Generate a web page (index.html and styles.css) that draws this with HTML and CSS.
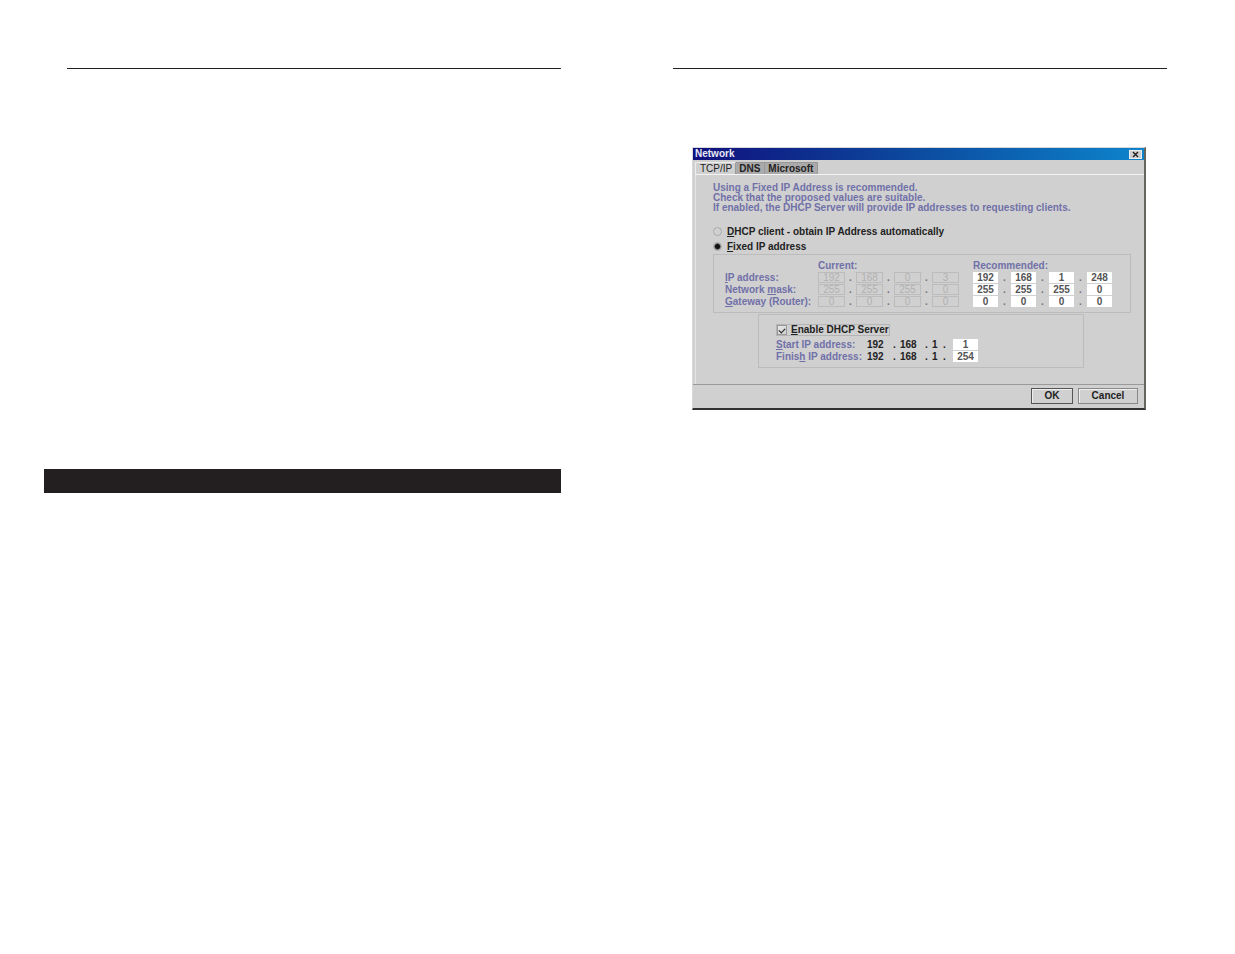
FILE: index.html
```html
<!DOCTYPE html>
<html lang="en">
<head>
	<meta charset="utf-8">
	<title>Network</title>
	<link rel="stylesheet" href="styles.css">
</head>
<body>
<div class="spread">
	<section class="page">
		<hr class="rule">
		<div class="band"></div>
	</section>
	<section class="page">
		<hr class="rule">
		<form class="dialog">
			<div class="titlebar">
				<span>Network</span>
				<button type="button" class="close" aria-label="Close">
					<svg width="7" height="7" viewBox="0 0 7 7"><path d="M1 1L6 6M6 1L1 6" stroke="#222" stroke-width="1.4"/></svg>
				</button>
			</div>
			<div class="tabs">
				<button type="button" class="tab active">TCP/IP</button>
				<button type="button" class="tab">DNS</button>
				<button type="button" class="tab">Microsoft</button>
			</div>
			<div class="panel">
				<p class="intro">Using a Fixed IP Address is recommended.<br>
				Check that the proposed values are suitable.<br>
				If enabled, the DHCP Server will provide IP addresses to requesting clients.</p>

				<label class="choice"><input type="radio" name="mode"><span><u>D</u>HCP client - obtain IP Address automatically</span></label>
				<label class="choice"><input type="radio" name="mode" checked><span><u>F</u>ixed IP address</span></label>

				<div class="group addresses">
					<span></span><span>Current:</span><span>Recommended:</span>

					<label for="ip"><u>I</u>P address:</label>
					<div class="octets current">
						<input value="192" aria-label="Current IP 1" disabled><i>.</i><input value="168" aria-label="Current IP 2" disabled><i>.</i><input value="0" aria-label="Current IP 3" disabled><i>.</i><input value="3" aria-label="Current IP 4" disabled>
					</div>
					<div class="octets">
						<input id="ip" value="192"><i>.</i><input value="168" aria-label="IP 2"><i>.</i><input value="1" aria-label="IP 3"><i>.</i><input value="248" aria-label="IP 4">
					</div>

					<label for="mask">Network <u>m</u>ask:</label>
					<div class="octets current">
						<input value="255" aria-label="Current mask 1" disabled><i>.</i><input value="255" aria-label="Current mask 2" disabled><i>.</i><input value="255" aria-label="Current mask 3" disabled><i>.</i><input value="0" aria-label="Current mask 4" disabled>
					</div>
					<div class="octets">
						<input id="mask" value="255"><i>.</i><input value="255" aria-label="Mask 2"><i>.</i><input value="255" aria-label="Mask 3"><i>.</i><input value="0" aria-label="Mask 4">
					</div>

					<label for="gateway"><u>G</u>ateway (Router):</label>
					<div class="octets current">
						<input value="0" aria-label="Current gateway 1" disabled><i>.</i><input value="0" aria-label="Current gateway 2" disabled><i>.</i><input value="0" aria-label="Current gateway 3" disabled><i>.</i><input value="0" aria-label="Current gateway 4" disabled>
					</div>
					<div class="octets">
						<input id="gateway" value="0"><i>.</i><input value="0" aria-label="Gateway 2"><i>.</i><input value="0" aria-label="Gateway 3"><i>.</i><input value="0" aria-label="Gateway 4">
					</div>
				</div>

				<div class="group dhcp">
					<label class="enable"><input type="checkbox" checked><span><u>E</u>nable DHCP Server</span></label>
					<div class="range">
						<label for="start"><u>S</u>tart IP address:</label>
						<b>192</b><b>.</b><b>168</b><b>.</b><b>1</b><b>.</b>
						<input id="start" value="1">
					</div>
					<div class="range">
						<label for="finish">Finis<u>h</u> IP address:</label>
						<b>192</b><b>.</b><b>168</b><b>.</b><b>1</b><b>.</b>
						<input id="finish" value="254">
					</div>
				</div>
			</div>
			<div class="buttons">
				<button type="button" class="ok">OK</button>
				<button type="button" class="cancel">Cancel</button>
			</div>
		</form>
	</section>
</div>
</body>
</html>
```
FILE: styles.css
```css
*{margin: 0;padding: 0;box-sizing: border-box;}
body{background: #fff;}
.spread{
	display: grid;
	grid-template-columns: 1fr 1fr;
	gap: 112px;
	padding: 68px 68px 68px 67px;
}
.rule{border: 0; height: 1px; background: #231f20;}
.band{height: 24px; margin: 400px 0 0 -23px; background: #231f20;}

.dialog{
	margin: 78px 21px 0 19px;
	background: #d0d0d0;
	border: 1px solid #d8d8d8;
	border-right: 2px solid #66665f;
	border-bottom: 2px solid #333;
	font: bold 10px/12px "Liberation Sans", Arial, sans-serif;
	color: #222;
}
.dialog input, .dialog button{font: inherit; color: inherit;}
.dialog u{text-underline-offset: 1px;}

.titlebar{
	display: flex;
	align-items: center;
	justify-content: space-between;
	height: 12px;
	padding: 0 2px;
	background: linear-gradient(to right, #10107c, #0c4ba0 50%, #0d84cc);
	color: #e8e8f4;
}
.close{
	display: flex;
	align-items: center;
	justify-content: center;
	width: 13px;
	height: 9px;
	border: 1px solid #eee;
	background: #d0d0d0;
}

.tabs{display: flex; padding: 2px 2px 0;}
.dialog .tab{
	height: 12px;
	padding: 0 4px 0 3px;
	border: 1px solid #999;
	border-width: 1px 1px 0 0;
	background: #aaa;
	line-height: 11px;
}
.dialog .tab.active{
	padding: 0 3px 0 4px;
	border-color: #eee #999 #eee #eee;
	border-left-width: 1px;
	background: #d0d0d0;
	font-weight: normal;
}

.panel{
	margin-left: 2px;
	padding: 8px 13px 16px 17px;
	border-top: 1px solid #f4f4f4;
	border-left: 1px solid #e4e4e4;
}
.intro{line-height: 10px; color: #7070a8; margin-bottom: 11px;}
.choice{display: flex; align-items: center; gap: 5px; height: 15px;}
.choice input{
	appearance: none;
	width: 9px;
	height: 9px;
	border: 1px solid #aaa;
	border-radius: 50%;
}
.choice input:checked{background: radial-gradient(circle, #111 2px, #d0d0d0 4px);}

.group{border: 1px solid #bcbcbc; color: #7070a8;}
.addresses{
	display: grid;
	grid-template-columns: 93px 155px 1fr;
	grid-auto-rows: 12px;
	padding: 5px 11px 4px;
}
.octets{display: flex;}
.octets i{width: 13px; text-align: center; font-style: normal; color: #777;}
.octets input, .range input{
	width: 25px;
	height: 11px;
	border: 0;
	background: #fff;
	color: #555;
	text-align: center;
}
.octets.current input{width: 27px; border: 1px solid #bcbcbc; background: none; color: #b0b0b0; font-weight: normal;}
.octets.current i{width: 11px;}

.dhcp{margin: 1px 47px 0 45px; padding: 9px 17px 4px;}
.enable{
	display: inline-flex;
	align-items: center;
	gap: 4px;
	height: 12px;
	border: 1px solid #b4b4b4;
	color: #222;
	margin-bottom: 3px;
	vertical-align: top;
}
.enable input{
	appearance: none;
	width: 10px;
	height: 10px;
	border: 1px solid #999;
	background: linear-gradient(135deg, #e8e8e8, #d0d0d0);
}
.enable input:checked::after{
	content: "";
	display: block;
	width: 5px;
	height: 3px;
	margin: 2px 0 0 1px;
	border: solid #222;
	border-width: 0 0 1px 1px;
	transform: rotate(-45deg);
}
.range{
	display: grid;
	grid-template-columns: 91px 26px 7px 25px 7px 11px 10px 25px;
	height: 12px;
}
.range b{color: #222;}

.buttons{
	display: flex;
	justify-content: flex-end;
	gap: 5px;
	padding: 3px 6px 4px;
	border-top: 1px solid #999;
}
.buttons button{
	height: 16px;
	border: 1px solid #888;
	background: #d0d0d0;
	box-shadow: inset 1px 1px #eee;
}
.ok{width: 42px;}
.cancel{width: 60px;}
.buttons .ok{border-color: #555;}
```
